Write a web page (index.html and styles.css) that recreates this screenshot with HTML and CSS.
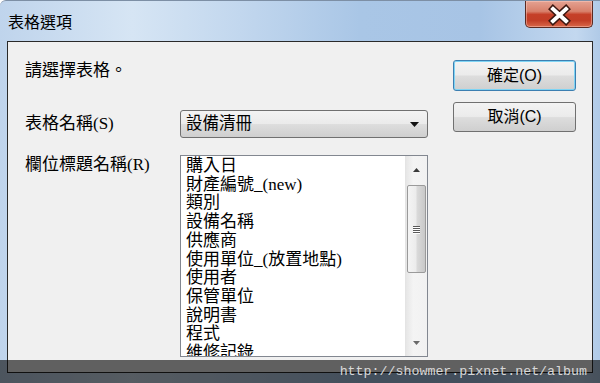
FILE: index.html
```html
<!DOCTYPE html>
<html lang="zh-Hant">

<head>
    <meta charset="UTF-8">
    <meta name="viewport" content="width=device-width, initial-scale=1.0">
    <title>表格選項</title>
    <link rel="stylesheet" href="styles.css">
</head>

<body>
    <div class="window">
        <div class="titlebar">
            <span class="title">表格選項</span>
            <button class="close" aria-label="關閉">
                <svg width="66" height="26" viewBox="0 0 66 26">
                    <path d="M27 8 L40 20 M40 8 L27 20" stroke="#3b1710" stroke-width="7" stroke-linecap="square" fill="none"/>
                    <path d="M27 8 L40 20 M40 8 L27 20" stroke="#ffffff" stroke-width="4" stroke-linecap="square" fill="none"/>
                </svg>
            </button>
        </div>

        <div class="dialog">
            <div class="form">
                <p class="intro">請選擇表格。</p>

                <div class="row">
                    <label class="label">表格名稱(S)</label>
                    <div class="select">
                        <span>設備清冊</span>
                        <svg width="9" height="5" viewBox="0 0 9 5"><path d="M0 0 H9 L4.5 5 Z" fill="#111"/></svg>
                    </div>
                </div>

                <div class="row row-list">
                    <label class="label">欄位標題名稱(R)</label>
                    <div class="listbox">
                        <ul class="items">
                            <li>購入日</li>
                            <li>財產編號_(new)</li>
                            <li>類別</li>
                            <li>設備名稱</li>
                            <li>供應商</li>
                            <li>使用單位_(放置地點)</li>
                            <li>使用者</li>
                            <li>保管單位</li>
                            <li>說明書</li>
                            <li>程式</li>
                            <li>維修記錄</li>
                        </ul>
                        <div class="scrollbar">
                            <div class="sb-btn">
                                <svg width="7" height="4" viewBox="0 0 7 4"><path d="M0 4 L3.5 0 L7 4 Z" fill="#3a3a3a"/></svg>
                            </div>
                            <div class="sb-track">
                                <div class="sb-thumb">
                                    <span class="grip"></span>
                                    <span class="grip"></span>
                                    <span class="grip"></span>
                                    <span class="grip"></span>
                                </div>
                            </div>
                            <div class="sb-btn">
                                <svg width="7" height="4" viewBox="0 0 7 4"><path d="M0 0 L7 0 L3.5 4 Z" fill="#6a6a6a"/></svg>
                            </div>
                        </div>
                    </div>
                </div>
            </div>

            <div class="actions">
                <button class="btn btn-default">確定(O)</button>
                <button class="btn btn-cancel">取消(C)</button>
            </div>
        </div>

        <div class="watermark">http://showmer.pixnet.net/album</div>
    </div>
</body>

</html>
```

FILE: styles.css
```css
* {
    margin: 0;
    padding: 0;
    box-sizing: border-box;
}

body {
    width: 600px;
    height: 383px;
    overflow: hidden;
    font-family: "Liberation Serif", "Noto Sans CJK TC", serif;
    color: #000;
}

.window {
    position: relative;
    width: 600px;
    height: 383px;
    overflow: hidden;
    border-top: 1px solid #7d8fa5;
    border-top-left-radius: 6px;
    background: linear-gradient(to right, #bfd4ec 0%, #d6e5f4 22%, #c2d7ee 40%, #a9c6e6 60%, #a7c4e5 80%, #c3d8ef 96%, #b0cae7 100%);
}

/* title bar */

.titlebar {
    height: 40px;
    display: flex;
    justify-content: space-between;
    align-items: center;
}

.title {
    margin-left: 8px;
    font-family: "Noto Sans CJK TC", sans-serif;
    font-size: 16px;
    line-height: 20px;
}

.close {
    all: unset;
    align-self: flex-start;
    width: 66px;
    height: 26px;
    margin-right: 7px;
    border: 1px solid #5b2a22;
    border-top: none;
    border-radius: 0 0 5px 5px;
    background: linear-gradient(#e4a292 0%, #d8806b 40%, #c53f28 52%, #c23e27 75%, #d8684a 100%);
    box-shadow: inset 0 0 0 1px rgba(255, 210, 200, 0.45);
}

.close svg {
    display: block;
    margin-top: -1px;
}

/* dialog body */

.dialog {
    height: 332px;
    margin: 0 7px;
    border: 1px solid #2a2a2a;
    background-color: #f0f0f0;
    display: flex;
    padding-left: 17px;
}

.form {
    width: 403px;
}

.intro {
    margin-top: 19px;
    font-size: 17px;
    line-height: 20px;
}

.row {
    display: flex;
    align-items: center;
    margin-top: 29px;
}

.row-list {
    align-items: flex-start;
    margin-top: 17px;
}

.label {
    width: 155px;
    flex-shrink: 0;
    font-size: 17px;
    line-height: 20px;
}

.select {
    width: 248px;
    height: 28px;
    display: flex;
    align-items: center;
    justify-content: space-between;
    padding: 0 8px 0 5px;
    border: 1px solid #707070;
    border-radius: 3px;
    background: linear-gradient(#f3f3f3 0%, #ebebeb 48%, #dddddd 52%, #cfcfcf 100%);
    font-size: 16.5px;
    line-height: 20px;
}

.select svg {
    margin-top: 1px;
}

/* list box */

.listbox {
    width: 248px;
    height: 202px;
    display: flex;
    border: 1px solid #828790;
    background-color: #fff;
}

.items {
    flex: 1;
    list-style: none;
    overflow: hidden;
    padding: 1px 0 0 5px;
    font-size: 17px;
    line-height: 18.7px;
    white-space: nowrap;
}

.scrollbar {
    width: 22px;
    display: flex;
    flex-direction: column;
    border-left: 1px solid #e4e4e4;
    background: linear-gradient(to right, #e6e6e6, #f4f4f4 35%, #f1f1f1);
}

.sb-btn {
    height: 27px;
    display: flex;
    align-items: center;
    justify-content: center;
}

.sb-track {
    flex: 1;
    padding-top: 2px;
}

.sb-thumb {
    height: 88px;
    margin: 0 1px;
    border: 1px solid #9a9a9a;
    border-radius: 2px;
    background: linear-gradient(to right, #f4f4f4 0%, #ececec 45%, #d9d9d9 55%, #c8c8c8 100%);
    display: flex;
    flex-direction: column;
    align-items: center;
    justify-content: center;
    gap: 1px;
}

.grip {
    width: 7px;
    height: 1px;
    background-color: #5a5a5a;
    box-shadow: 0 1px 0 #ffffff;
}

/* buttons */

.actions {
    display: flex;
    flex-direction: column;
    gap: 11px;
    margin-left: 25px;
    padding-top: 18px;
}

.btn {
    all: unset;
    width: 121px;
    height: 29px;
    text-align: center;
    border: 1px solid #707070;
    border-radius: 3px;
    background: linear-gradient(#f3f3f3 0%, #ebebeb 48%, #dddddd 52%, #cfcfcf 100%);
    font-family: "Liberation Sans", "Noto Sans CJK TC", sans-serif;
    font-size: 16px;
    line-height: 27px;
}

.btn-default {
    border-color: #3c7fb1;
    box-shadow: inset 0 0 0 1px #7fd4f4;
}

.btn-cancel {
    height: 28px;
    line-height: 26px;
}

/* watermark band laid over the bottom edge */

.watermark {
    position: absolute;
    left: 0;
    right: 0;
    top: 359px;
    height: 24px;
    padding-right: 13px;
    background-color: rgba(0, 0, 0, 0.6);
    color: #d8d8d8;
    font-family: "Liberation Mono", monospace;
    font-size: 13.3px;
    line-height: 24px;
    text-align: right;
}
```
